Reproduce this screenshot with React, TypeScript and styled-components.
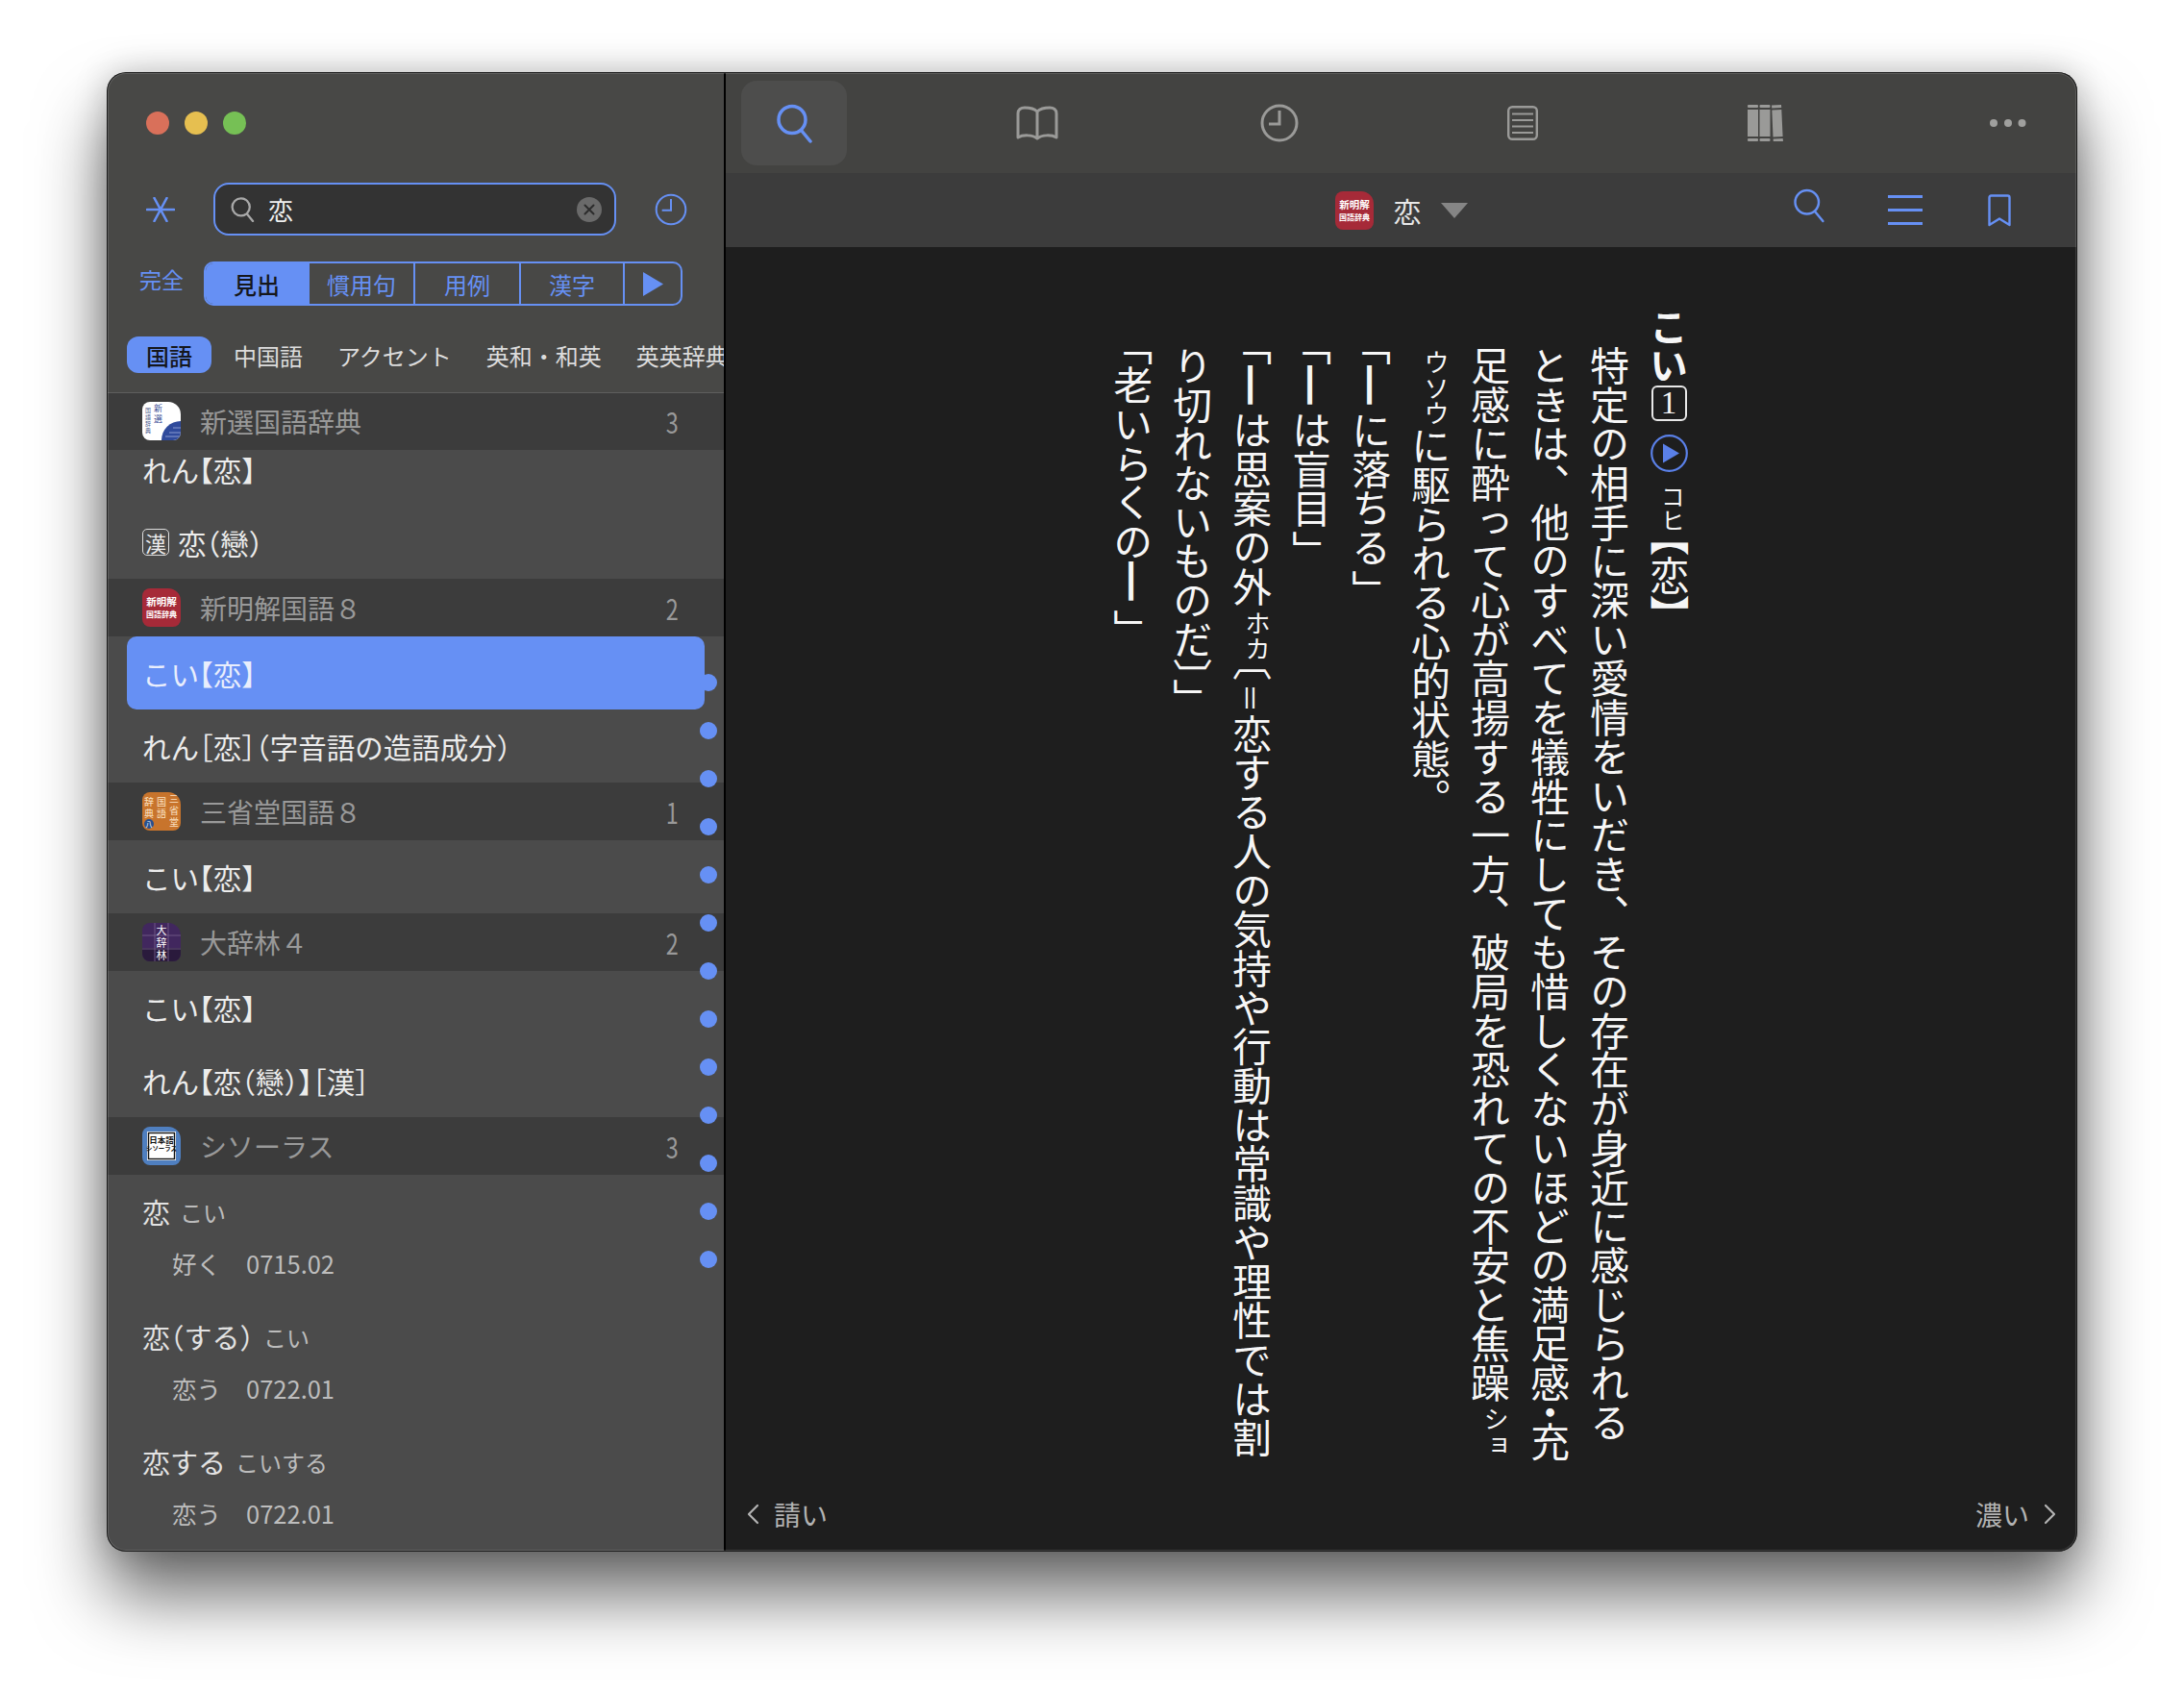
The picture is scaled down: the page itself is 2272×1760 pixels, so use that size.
/*********************************************************
* IMPORTS
*********************************************************/
import { ReactElement, ReactNode } from 'react';
import styled, { createGlobalStyle } from 'styled-components';

/*********************************************************
*   STYLES
*********************************************************/
const BLUE = '#6690f4';

const GlobalStyle = createGlobalStyle`
    html, body {
        margin: 0;
        background: #fff;
    }

    body {
        font-family: "Noto Sans CJK JP", "Noto Sans", sans-serif;
        text-spacing-trim: space-all;
    }
`;

const Page = styled.div`
    width: 2272px;
    height: 1760px;
    box-sizing: border-box;
    padding: 75px 0 0 111px;
    overflow: hidden;
`;

const Window = styled.div`
    width: 2050px;
    height: 1539px;
    display: flex;
    border-radius: 20px;
    overflow: hidden;
    position: relative;
    box-shadow: 0 46px 72px rgba(0, 0, 0, 0.58), 0 0 34px rgba(0, 0, 0, 0.22);

    &::after {
        content: "";
        position: absolute;
        inset: 0;
        z-index: 3;
        border-radius: 20px;
        pointer-events: none;
        box-shadow: inset 0 0 0 1px #1a1a1a, inset 0 0 0 2px rgba(255, 255, 255, 0.14);
    }
`;

/* SIDEBAR **********************************************/
const Sidebar = styled.aside`
    width: 642px;
    flex-shrink: 0;
    display: flex;
    flex-direction: column;
    background: #484846;
    border-right: 2px solid #000;
    position: relative;
`;

const Lights = styled.div`
    height: 106px;
    display: flex;
    align-items: center;
    gap: 16px;
    padding-left: 41px;
`;

const Light = styled.span<{ $color: string }>`
    width: 24px;
    height: 24px;
    border-radius: 50%;
    background: ${(props) => props.$color};
`;

const SearchRow = styled.div`
    margin-top: 9px;
    height: 55px;
    display: flex;
    align-items: center;
    gap: 40px;
    padding-left: 41px;
`;

const SearchField = styled.div`
    width: 419px;
    height: 55px;
    box-sizing: border-box;
    display: flex;
    align-items: center;
    padding: 0 13px 0 15px;
    background: #333;
    border: 2px solid ${BLUE};
    border-radius: 16px;
`;

const SearchValue = styled.span`
    flex: 1;
    margin-left: 14px;
    color: #f0f0f0;
    font-size: 26px;
    line-height: 1;
`;

const ClearButton = styled.span`
    width: 26px;
    height: 26px;
    border-radius: 50%;
    background: #6a6a6a;
    display: flex;
    align-items: center;
    justify-content: center;
`;

const FilterRow = styled.div`
    margin-top: 27px;
    display: flex;
    gap: 21px;
    padding-left: 34px;
`;

const FilterLabel = styled.span`
    color: ${BLUE};
    font-size: 23px;
    line-height: 36px;
`;

const Segments = styled.div`
    width: 498px;
    height: 46px;
    box-sizing: border-box;
    display: flex;
    border: 2px solid ${BLUE};
    border-radius: 10px;
    overflow: hidden;
`;

const Segment = styled.span<{ $active?: boolean; $width: number }>`
    width: ${(props) => props.$width}px;
    flex-shrink: 0;
    display: flex;
    align-items: center;
    justify-content: center;
    font-size: 24px;
    font-weight: ${(props) => (props.$active ? 500 : 400)};
    color: ${(props) => (props.$active ? '#15171c' : BLUE)};
    background: ${(props) => (props.$active ? BLUE : 'transparent')};
    border-right: 2px solid ${BLUE};
    box-sizing: border-box;

    &:last-child {
        border-right: 0;
        flex: 1;
    }
`;

const Categories = styled.div`
    margin-top: 32px;
    height: 38px;
    display: flex;
    align-items: center;
    gap: 36px;
    padding-left: 21px;
    overflow: hidden;
    white-space: nowrap;
    font-size: 24px;
    color: #dcdcdc;
`;

const Category = styled.span<{ $active?: boolean }>`
    flex-shrink: 0;
    ${(props) => props.$active && `
        width: 88px;
        height: 38px;
        margin-right: -13px;
        display: flex;
        align-items: center;
        justify-content: center;
        border-radius: 12px;
        background: ${BLUE};
        color: #15171c;
        font-weight: 500;
    `}
`;

const List = styled.div`
    margin-top: 20px;
    flex: 1;
    min-height: 0;
    background: #4b4b4b;
    overflow: hidden;
    font-feature-settings: "halt";

    section:first-child > div:first-child {
        box-shadow: inset 0 1px 0 #5e5e5e;
    }
`;

const SectionHeader = styled.div`
    height: 60px;
    display: flex;
    align-items: center;
    gap: 20px;
    padding: 0 45px 0 37px;
    background: #3c3c3c;
    position: relative;
    z-index: 1;
    color: #999;
    font-size: 28px;
`;

const SectionTitle = styled.span`
    flex: 1;
`;

const SectionCount = styled.span`
    font-size: 30px;
    line-height: 1;
    transform: scaleX(0.78);
`;

const Row = styled.div<{ $selected?: boolean; $scrolled?: boolean }>`
    height: 76px;
    box-sizing: border-box;
    display: flex;
    align-items: center;
    gap: 9px;
    font-size: 29.5px;
    color: ${(props) => (props.$selected ? '#e9eefc' : '#ececec')};
    padding-left: ${(props) => (props.$selected ? 16 : 37)}px;
    margin: ${(props) => (props.$selected ? '0 20px 0 21px' : 0)};
    margin-top: ${(props) => (props.$scrolled ? -18 : 0)}px;
    background: ${(props) => (props.$selected ? BLUE : 'transparent')};
    border-radius: ${(props) => (props.$selected ? 10 : 0)}px;
`;

const KanjiBadge = styled.span`
    width: 28px;
    height: 28px;
    box-sizing: border-box;
    display: flex;
    align-items: center;
    justify-content: center;
    border: 1.5px solid #ddd;
    border-radius: 5px;
    font-size: 22px;
    line-height: 1;
`;

const Entry = styled.div`
    height: 130px;
`;

const EntryHead = styled.div`
    height: 76px;
    display: flex;
    align-items: center;
    gap: 10px;
    padding-left: 37px;
    font-size: 29px;
    color: #e2e2e2;
`;

const EntryReading = styled.span`
    font-size: 24px;
    color: #bcbcbc;
`;

const EntrySub = styled.div`
    margin-top: 1px;
    display: flex;
    gap: 26px;
    padding-left: 68px;
    line-height: 30px;
    font-size: 25.5px;
    color: #bdbdbd;
`;

const IndexRail = styled.div`
    position: absolute;
    top: 626px;
    right: 7px;
    z-index: 2;
    display: flex;
    flex-direction: column;
    gap: 32px;
`;

const IndexDot = styled.span`
    width: 18px;
    height: 18px;
    border-radius: 50%;
    background: ${BLUE};
`;

/* READER ***********************************************/
const Reader = styled.main`
    flex: 1;
    min-width: 0;
    display: flex;
    flex-direction: column;
    background: #1e1e1e;
`;

const Toolbar = styled.div`
    height: 105px;
    box-sizing: border-box;
    display: flex;
    justify-content: space-between;
    padding: 9px 17px 0 16px;
    background: #434341;
`;

const ToolButton = styled.div<{ $active?: boolean }>`
    width: 110px;
    height: 88px;
    display: flex;
    align-items: center;
    justify-content: center;
    border-radius: 16px;
    background: ${(props) => (props.$active ? '#4d4d4c' : 'transparent')};
`;

const SubBar = styled.div`
    height: 77px;
    box-sizing: border-box;
    display: grid;
    grid-template-columns: 1fr auto 1fr;
    align-items: center;
    padding: 0 69px;
    background: #3c3c3c;
`;

const WordPicker = styled.div`
    grid-column: 2;
    display: flex;
    align-items: center;
    gap: 20px;
    color: #e8e8e8;
    font-size: 29px;
`;

const PickerArrow = styled.span`
    width: 0;
    height: 0;
    border-left: 14px solid transparent;
    border-right: 14px solid transparent;
    border-top: 16px solid #858585;
`;

const SubActions = styled.div`
    grid-column: 3;
    justify-self: end;
    display: flex;
    align-items: center;
    gap: 68px;
`;

const SubSearch = styled.span`
    display: flex;
    margin: 0 -3px 10px 0;
`;

const Article = styled.article`
    flex: 1;
    min-height: 0;
    box-sizing: border-box;
    writing-mode: vertical-rl;
    padding: 63px 394px 0 0;
    color: #f6f6f6;
    font-size: 40.7px;
    line-height: 62px;
    white-space: nowrap;
    overflow: hidden;
`;

const HeadLine = styled.div`
    display: flex;
    align-items: center;
    width: 62px;
    height: 100%;
`;

const HeadWord = styled.span`
    font-size: 40px;
    font-weight: 700;
    line-height: 1;
`;

const NumberBox = styled.span`
    writing-mode: horizontal-tb;
    width: 37px;
    height: 37px;
    box-sizing: border-box;
    margin-top: 1px;
    display: flex;
    align-items: center;
    justify-content: center;
    border: 2px solid #e8e8e8;
    border-radius: 6px;
    font-family: "Liberation Serif", serif;
    font-size: 33px;
    line-height: 1;
`;

const PlayMark = styled.span`
    margin-top: 14px;
    display: flex;
`;

const HeadReading = styled.span`
    margin: 13px 0 0 8px;
    font-size: 25px;
    line-height: 1;
`;

const HeadKanji = styled.span`
    margin-top: 4px;
    line-height: 1;
`;

const Line = styled.div`
    margin-top: 40px;
`;

const Half = styled.span<{ $bold?: boolean; $close?: boolean }>`
    font-feature-settings: "vhal";
    font-weight: ${(props) => (props.$bold ? 700 : 400)};
    padding-top: ${(props) => (props.$close ? 3 : 0)}px;
`;

const Small = styled.span`
    padding-top: 4px;
    font-size: 26.5px;
    line-height: 1;
    vertical-align: 6px;
`;

const Equals = styled.span`
    padding: 3px 0 2px;
    font-size: 30px;
    line-height: 1;
`;

const Dash = styled.span`
    padding-bottom: 6px;
    text-orientation: sideways;
    font-weight: 700;
`;

const Pager = styled.div`
    height: 78px;
    flex-shrink: 0;
    display: flex;
    align-items: center;
    justify-content: space-between;
    padding: 0 22px;
    color: #b3b3b3;
    font-size: 28px;
`;

const PagerLink = styled.span`
    display: flex;
    align-items: center;
    gap: 15px;
`;

/* ICONS ************************************************/
const IconSvg = styled.svg`
    display: block;
    flex-shrink: 0;
`;

const DictSvg = styled.svg`
    display: block;
    flex-shrink: 0;
    width: 40px;
    height: 40px;
    border-radius: 8px 13px 8px 8px;
    font-family: "Noto Sans CJK JP", sans-serif;
`;

/*********************************************************
*   TYPES
*********************************************************/
type DictKind = 'shinsen' | 'shinmeikai' | 'sansei' | 'daijirin' | 'thesaurus';

type SectionRow = {
    text: string,
    selected?: boolean,
    badge?: string,
    scrolled?: boolean
};

type Section = {
    title: string,
    count: number,
    kind: DictKind,
    rows: SectionRow[]
};

/*********************************************************
*   DATA
*********************************************************/
const categories = ['国語', '中国語', 'アクセント', '英和・和英', '英英辞典'];

const sections: Section[] = [
    {
        title: '新選国語辞典', count: 3, kind: 'shinsen',
        rows: [
            { text: 'れん【恋】', scrolled: true },
            { text: '恋（戀）', badge: '漢' }
        ]
    },
    {
        title: '新明解国語８', count: 2, kind: 'shinmeikai',
        rows: [
            { text: 'こい【恋】', selected: true },
            { text: 'れん［恋］（字音語の造語成分）' }
        ]
    },
    { title: '三省堂国語８', count: 1, kind: 'sansei', rows: [{ text: 'こい【恋】' }] },
    {
        title: '大辞林４', count: 2, kind: 'daijirin',
        rows: [{ text: 'こい【恋】' }, { text: 'れん【恋（戀）】［漢］' }]
    }
];

const entries = [
    { word: '恋', reading: 'こい', sub: '好く', code: '0715.02' },
    { word: '恋（する）', reading: 'こい', sub: '恋う', code: '0722.01' },
    { word: '恋する', reading: 'こいする', sub: '恋う', code: '0722.01' }
];

const dots = Array.from({ length: 13 }, (_, index) => index);

/*********************************************************
*   ICONS
*********************************************************/
const SearchIcon = ({ color, size = 40, stroke = 3.5 }: { color: string, size?: number, stroke?: number }): ReactElement => (
    <IconSvg width={size} height={size * 1.05} viewBox="0 0 40 42" fill="none" stroke={color} strokeWidth={stroke} strokeLinecap="round">
        <circle cx="18" cy="17.5" r="14" />
        <path d="M27.5 28.5 L37 40" />
    </IconSvg>
);

const ClockIcon = ({ color, size, stroke }: { color: string, size: number, stroke: number }): ReactElement => (
    <IconSvg width={size} height={size} viewBox="0 0 40 40" fill="none" stroke={color} strokeWidth={stroke}>
        <circle cx="20" cy="20" r="18" />
        <path d="M20 7 V21 H9" />
    </IconSvg>
);

const BookIcon = (): ReactElement => (
    <IconSvg width="44" height="36" viewBox="0 0 44 36" fill="none" stroke="#9a9a98" strokeWidth="3" strokeLinejoin="round">
        <path d="M22 6 C19 3 14 2 9 2 C5 2 2 4 2 8 V33 C7 30 17 30 22 34 C27 30 37 30 42 33 V8 C42 4 39 2 35 2 C30 2 25 3 22 6 Z M22 6 V34" />
    </IconSvg>
);

const PageIcon = (): ReactElement => (
    <IconSvg width="32" height="36" viewBox="0 0 32 36" fill="none" stroke="#9a9a98">
        <rect x="1.2" y="1.2" width="29.6" height="33.6" rx="4" strokeWidth="2.4" />
        <path d="M5 8.5 H27 M5 15 H27 M5 21.5 H27 M5 28 H27" strokeWidth="2" />
    </IconSvg>
);

const ShelfIcon = (): ReactElement => (
    <IconSvg width="37" height="38" viewBox="0 0 37 38" fill="#9a9a98">
        <rect x="0" y="0" width="11" height="3" rx="1" />
        <rect x="0" y="5" width="11" height="28" />
        <rect x="0" y="35" width="11" height="3" rx="1" />
        <rect x="12.5" y="0" width="11" height="3" rx="1" />
        <rect x="12.5" y="5" width="11" height="28" />
        <rect x="12.5" y="35" width="11" height="3" rx="1" />
        <path d="M25 0.6 L35 0 L35.2 3 L25.2 3.4 Z M25.3 5.4 L35.3 5 L36.6 33 L26.5 33.4 Z M26.6 35.4 L36.7 35 L37 38 L26.8 38 Z" />
    </IconSvg>
);

const MoreIcon = (): ReactElement => (
    <IconSvg width="38" height="8" viewBox="0 0 38 8" fill="#a0a09e">
        <circle cx="4" cy="4" r="4" />
        <circle cx="19" cy="4" r="4" />
        <circle cx="33.5" cy="4" r="4" />
    </IconSvg>
);

const MenuIcon = (): ReactElement => (
    <IconSvg width="36" height="31" viewBox="0 0 36 31" fill={BLUE}>
        <rect y="0" width="36" height="3" />
        <rect y="14" width="36" height="3" />
        <rect y="28" width="36" height="3" />
    </IconSvg>
);

const BookmarkIcon = (): ReactElement => (
    <IconSvg width="24" height="34" viewBox="0 0 24 34" fill="none" stroke={BLUE} strokeWidth="2.4" strokeLinejoin="round">
        <path d="M1.5 3.5 Q1.5 1.5 3.5 1.5 H20.5 Q22.5 1.5 22.5 3.5 V32 L12 25.5 L1.5 32 Z" />
    </IconSvg>
);

const StarIcon = (): ReactElement => (
    <IconSvg width="30" height="26" viewBox="0 0 30 26" fill="none" stroke={BLUE} strokeWidth="2.6" strokeLinecap="round">
        <path d="M1 13 H29 M8.5 1 L21.5 25 M21.5 1 L8.5 25" />
    </IconSvg>
);

const ClearIcon = (): ReactElement => (
    <IconSvg width="12" height="12" viewBox="0 0 12 12" fill="none" stroke="#2c2c2c" strokeWidth="2" strokeLinecap="round">
        <path d="M1.5 1.5 L10.5 10.5 M10.5 1.5 L1.5 10.5" />
    </IconSvg>
);

const PlaySmallIcon = (): ReactElement => (
    <IconSvg width="21" height="25" viewBox="0 0 21 25" fill={BLUE}>
        <path d="M0 0 L21 12.5 L0 25 Z" />
    </IconSvg>
);

const PlayCircleIcon = (): ReactElement => (
    <IconSvg width="39" height="39" viewBox="0 0 39 39">
        <circle cx="19.5" cy="19.5" r="18.3" fill="none" stroke="#5a80e8" strokeWidth="2.2" />
        <path d="M13 9.5 L30 19.5 L13 29.5 Z" fill="#5a80e8" />
    </IconSvg>
);

const ChevronIcon = ({ flip }: { flip?: boolean }): ReactElement => (
    <IconSvg width="13" height="22" viewBox="0 0 13 22" fill="none" stroke="#b3b3b3" strokeWidth="2.2" strokeLinecap="round" strokeLinejoin="round">
        <path d={flip ? 'M2 2 L11 11 L2 20' : 'M11 2 L2 11 L11 20'} />
    </IconSvg>
);

const DictIcon = ({ kind }: { kind: DictKind }): ReactElement => {
    if (kind === 'shinsen') {
        return (
            <DictSvg viewBox="0 0 40 40">
                <rect width="40" height="40" fill="#fff" />
                <path d="M40 20 A20 20 0 0 0 20 40 H40 Z" fill="#2f4a9c" />
                <path d="M28 32 H40 M24 36 H40 M32 27 H40" stroke="#8b9bd0" strokeWidth="1" />
                <text x="12" y="10" fontSize="9" fill="#3b4f96">新</text>
                <text x="12" y="21" fontSize="9" fill="#3b4f96">選</text>
                <text x="3" y="11" fontSize="6" fill="#50608f">国</text>
                <text x="3" y="18" fontSize="6" fill="#50608f">語</text>
                <text x="3" y="25" fontSize="6" fill="#50608f">辞</text>
                <text x="3" y="32" fontSize="6" fill="#50608f">典</text>
            </DictSvg>
        );
    }

    if (kind === 'shinmeikai') {
        return (
            <DictSvg viewBox="0 0 40 40">
                <rect width="40" height="40" fill="#a62a38" />
                <text x="20" y="18" fontSize="10.5" fontWeight="700" fill="#fff" textAnchor="middle">新明解</text>
                <text x="20" y="30" fontSize="8" fontWeight="700" fill="#fff" textAnchor="middle">国語辞典</text>
            </DictSvg>
        );
    }

    if (kind === 'sansei') {
        return (
            <DictSvg viewBox="0 0 40 40">
                <rect width="40" height="40" fill="#c8742c" />
                <text x="28" y="11" fontSize="10" fill="#fbe3c4">三</text>
                <text x="28" y="23" fontSize="10" fill="#fbe3c4">省</text>
                <text x="28" y="35" fontSize="10" fill="#fbe3c4">堂</text>
                <text x="15" y="14" fontSize="10" fill="#fbe3c4">国</text>
                <text x="15" y="26" fontSize="10" fill="#fbe3c4">語</text>
                <text x="2" y="14" fontSize="10" fill="#fbe3c4">辞</text>
                <text x="2" y="26" fontSize="10" fill="#fbe3c4">典</text>
                <circle cx="7" cy="33" r="5" fill="#27508f" />
                <text x="7" y="36" fontSize="7" fill="#fff" textAnchor="middle">八</text>
            </DictSvg>
        );
    }

    if (kind === 'daijirin') {
        return (
            <DictSvg viewBox="0 0 40 40">
                <rect width="40" height="40" fill="#41275e" />
                <rect y="26" width="40" height="14" fill="#2a1a3c" />
                <path d="M0 13 H40 M0 27 H40 M13 0 V40 M27 0 V40" stroke="#7a6390" strokeWidth="0.8" />
                <text x="20" y="12" fontSize="11" fill="#fff" textAnchor="middle">大</text>
                <text x="20" y="25" fontSize="11" fill="#fff" textAnchor="middle">辞</text>
                <text x="20" y="38" fontSize="11" fill="#fff" textAnchor="middle">林</text>
            </DictSvg>
        );
    }

    return (
        <DictSvg viewBox="0 0 40 40">
            <rect width="40" height="40" fill="#4f7fc0" />
            <rect x="5" y="5" width="30" height="30" fill="#fff" />
            <rect x="6.5" y="6.5" width="27" height="27" fill="none" stroke="#111" strokeWidth="1.4" />
            <text x="20" y="17" fontSize="8.5" fontWeight="700" fill="#111" textAnchor="middle">日本語</text>
            <text x="20" y="25" fontSize="6.4" fontWeight="700" fill="#111" textAnchor="middle">シソーラス</text>
        </DictSvg>
    );
};

/*********************************************************
*   COMPONENT
*********************************************************/
const renderRow = (row: SectionRow): ReactNode => (
    <Row key={row.text} $selected={row.selected} $scrolled={row.scrolled}>
        {row.badge && <KanjiBadge>{row.badge}</KanjiBadge>}
        <span>{row.text}</span>
    </Row>
);

const App = (): ReactElement => (
    <Page lang="ja">
        <GlobalStyle />
        <Window>
            <Sidebar>
                <Lights>
                    <Light $color="#d9705a" />
                    <Light $color="#e6bf50" />
                    <Light $color="#76c055" />
                </Lights>
                <SearchRow>
                    <StarIcon />
                    <SearchField>
                        <SearchIcon color="#a8a8a8" size={26} />
                        <SearchValue>恋</SearchValue>
                        <ClearButton><ClearIcon /></ClearButton>
                    </SearchField>
                    <ClockIcon color={BLUE} size={34} stroke={2.4} />
                </SearchRow>
                <FilterRow>
                    <FilterLabel>完全</FilterLabel>
                    <Segments>
                        <Segment $active $width={108}>見出</Segment>
                        <Segment $width={110}>慣用句</Segment>
                        <Segment $width={110}>用例</Segment>
                        <Segment $width={108}>漢字</Segment>
                        <Segment $width={60}><PlaySmallIcon /></Segment>
                    </Segments>
                </FilterRow>
                <Categories>
                    {categories.map((category, index) => (
                        <Category key={category} $active={index === 0}>{category}</Category>
                    ))}
                </Categories>
                <List>
                    {sections.map((section) => (
                        <section key={section.title}>
                            <SectionHeader>
                                <DictIcon kind={section.kind} />
                                <SectionTitle>{section.title}</SectionTitle>
                                <SectionCount>{section.count}</SectionCount>
                            </SectionHeader>
                            {section.rows.map(renderRow)}
                        </section>
                    ))}
                    <SectionHeader>
                        <DictIcon kind="thesaurus" />
                        <SectionTitle>シソーラス</SectionTitle>
                        <SectionCount>3</SectionCount>
                    </SectionHeader>
                    {entries.map((entry) => (
                        <Entry key={entry.word}>
                            <EntryHead>
                                <span>{entry.word}</span>
                                <EntryReading>{entry.reading}</EntryReading>
                            </EntryHead>
                            <EntrySub>
                                <span>{entry.sub}</span>
                                <span>{entry.code}</span>
                            </EntrySub>
                        </Entry>
                    ))}
                </List>
                <IndexRail>
                    {dots.map((dot) => <IndexDot key={dot} />)}
                </IndexRail>
            </Sidebar>
            <Reader>
                <Toolbar>
                    <ToolButton $active><SearchIcon color={BLUE} /></ToolButton>
                    <ToolButton><BookIcon /></ToolButton>
                    <ToolButton><ClockIcon color="#9a9a98" size={40} stroke={3} /></ToolButton>
                    <ToolButton><PageIcon /></ToolButton>
                    <ToolButton><ShelfIcon /></ToolButton>
                    <ToolButton><MoreIcon /></ToolButton>
                </Toolbar>
                <SubBar>
                    <WordPicker>
                        <DictIcon kind="shinmeikai" />
                        <span>恋</span>
                        <PickerArrow />
                    </WordPicker>
                    <SubActions>
                        <SubSearch><SearchIcon color={BLUE} size={35} stroke={2.8} /></SubSearch>
                        <MenuIcon />
                        <BookmarkIcon />
                    </SubActions>
                </SubBar>
                <Article>
                    <HeadLine>
                        <HeadWord>こい</HeadWord>
                        <NumberBox>1</NumberBox>
                        <PlayMark><PlayCircleIcon /></PlayMark>
                        <HeadReading>コヒ</HeadReading>
                        <HeadKanji><Half $bold>【</Half>恋<Half $bold>】</Half></HeadKanji>
                    </HeadLine>
                    <Line>特定の相手に深い愛情をいだき、その存在が身近に感じられる</Line>
                    <Line>ときは、他のすべてを犠牲にしても惜しくないほどの満足感<Half>・</Half>充</Line>
                    <Line>足感に酔って心が高揚する一方、破局を恐れての不安と焦躁<Small>ショ</Small></Line>
                    <Line><Small>ウソウ</Small>に駆られる心的状態。</Line>
                    <Line><Half>「</Half><Dash>━</Dash>に落ちる<Half $close>」</Half></Line>
                    <Line><Half>「</Half><Dash>━</Dash>は盲目<Half $close>」</Half></Line>
                    <Line><Half>「</Half><Dash>━</Dash>は思案の外<Small>ホカ</Small><Half>〔</Half><Equals>＝</Equals>恋する人の気持や行動は常識や理性では割</Line>
                    <Line>り切れないものだ<Half>〕」</Half></Line>
                    <Line><Half>「</Half>老いらくの<Dash>━</Dash><Half $close>」</Half></Line>
                </Article>
                <Pager>
                    <PagerLink><ChevronIcon />請い</PagerLink>
                    <PagerLink>濃い<ChevronIcon flip /></PagerLink>
                </Pager>
            </Reader>
        </Window>
    </Page>
);

/*********************************************************
*   EXPORT
*********************************************************/
export default App;
